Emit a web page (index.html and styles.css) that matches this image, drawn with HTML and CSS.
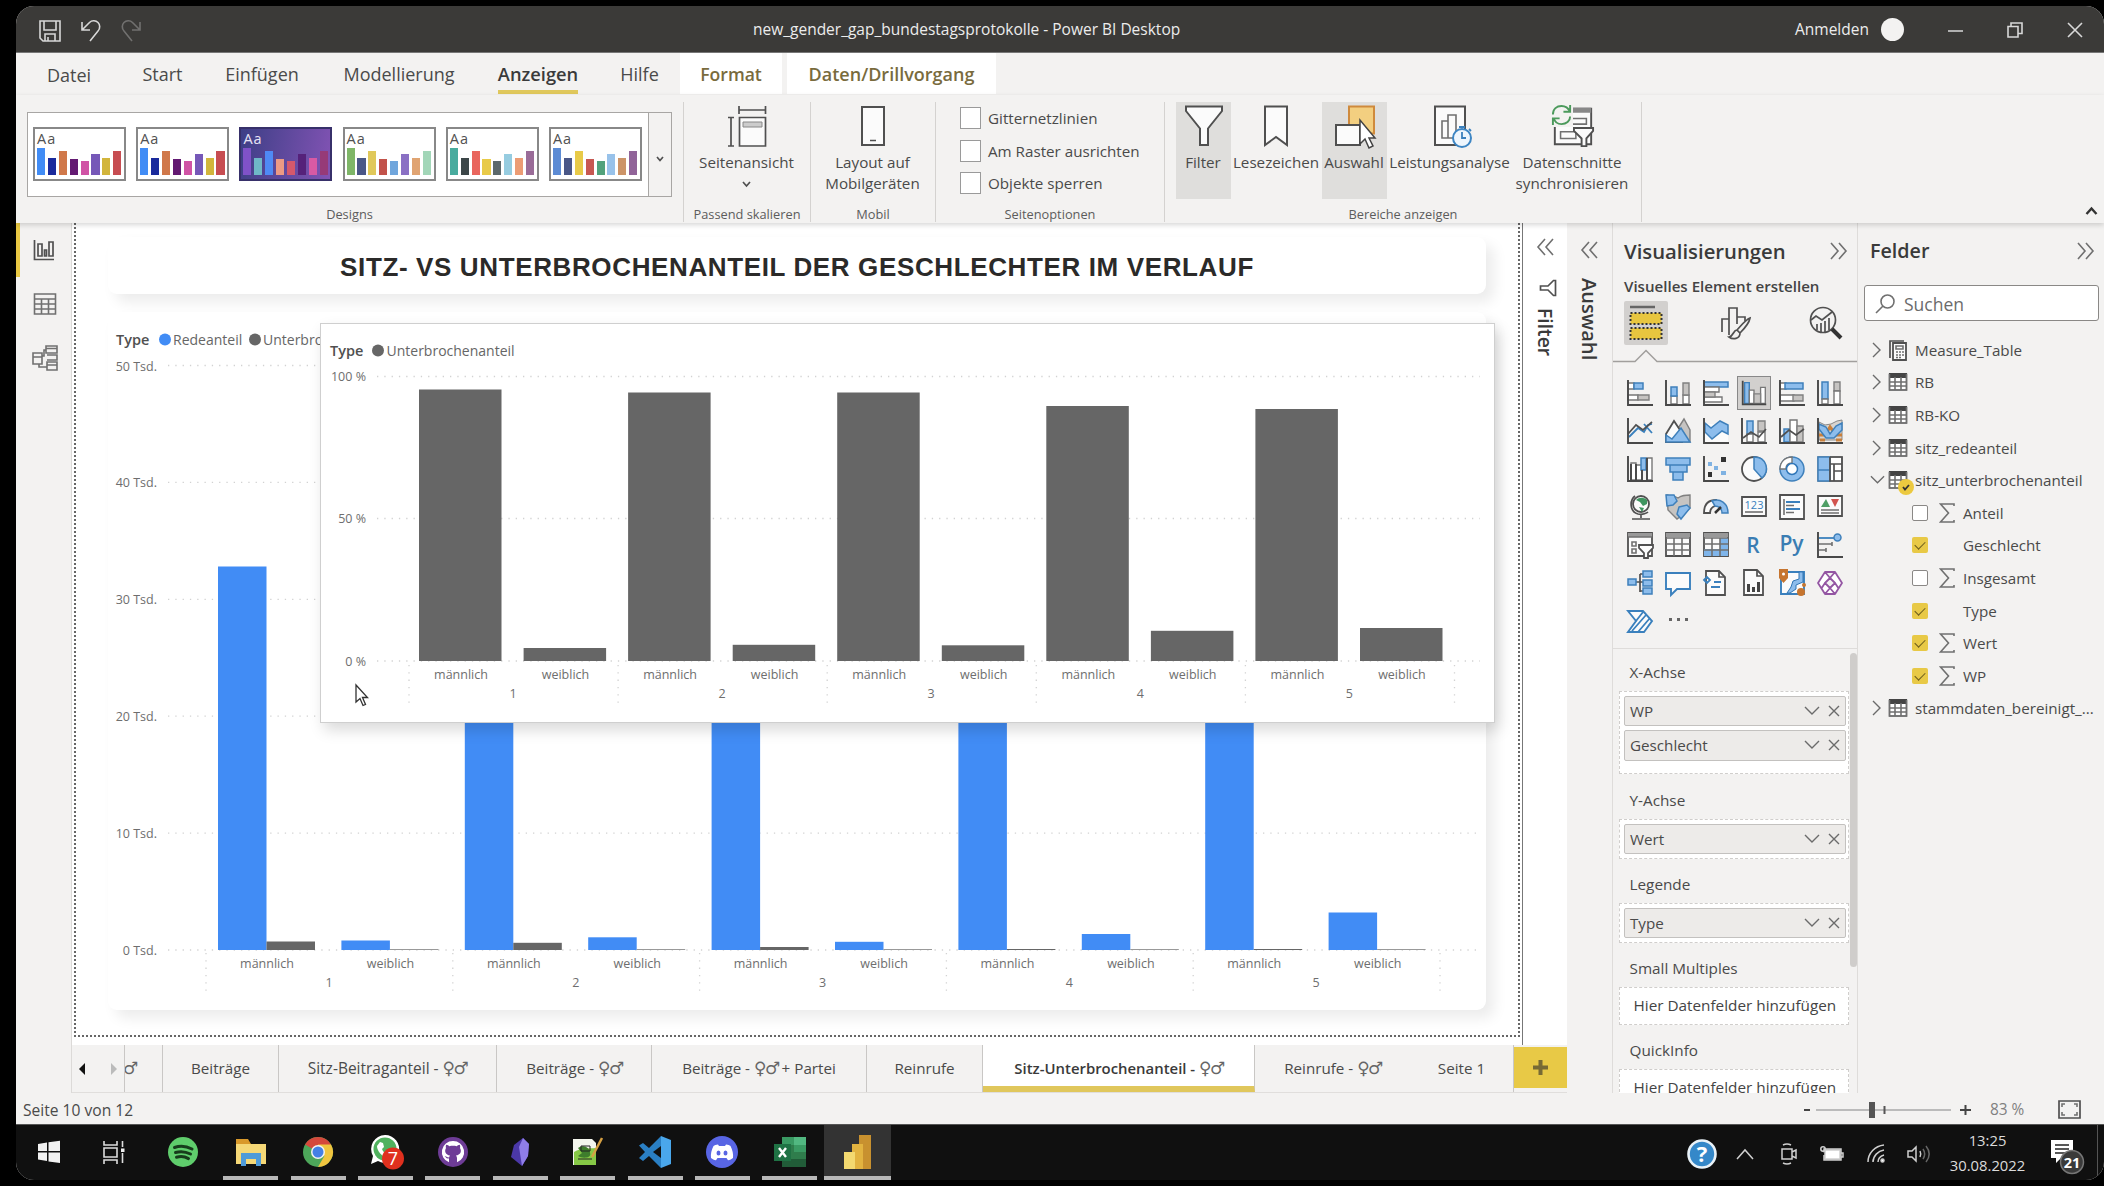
FILE: index.html
```html
<!DOCTYPE html>
<html lang="de">
<head>
<meta charset="utf-8">
<title>new_gender_gap_bundestagsprotokolle - Power BI Desktop</title>
<link rel="stylesheet" href="styles.css">
</head>
<body>
<svg width="0" height="0" class="defs">
  <defs>
    <symbol id="tbl" viewBox="0 0 20 20"><path class="wh" d="M1.500 2h17v16h-17z"/><path fill="#444" d="M1 1h18v5H1z"/><path class="ln" d="M1.500 2v16h17V2M1.500 10h17M1.500 14h17M7 5v13M13 5v13"/></symbol>
    <symbol id="dbl-left" viewBox="0 0 18 18"><path class="ln" d="M9 1 2 9l7 8M17 1l-7 8 7 8"/></symbol>
    <symbol id="dbl-right" viewBox="0 0 18 18"><path class="ln" d="m1 1 7 8-7 8M9 1l7 8-7 8"/></symbol>
    <symbol id="chev-right" viewBox="0 0 9 16"><path class="thin" d="m1 1 7 7-7 7"/></symbol>
    <symbol id="chev-down" viewBox="0 0 16 10"><path class="thin" d="m1 1 7 7 7-7"/></symbol>
    <symbol id="cross" viewBox="0 0 12 12"><path class="thin" d="m1 1 10 10M11 1 1 11"/></symbol>
    <symbol id="sigma" viewBox="0 0 16 20"><path class="ln" d="M15 3V1H1.500l8 9-8 9H15v-2"/></symbol>
  </defs>
</svg>
<div class="window">
  <header class="titlebar">
    <div class="quick">
      <svg width="22" height="22" viewBox="0 0 22 22"><path d="M1 1h20v20H4l-3-3zM5 1v9h12V1M6 21v-7h10v7M9 17v4"/></svg>
      <svg width="20" height="22" viewBox="0 0 20 22"><path d="M1 2v8h8M1.500 9.500 8.500 2.500C11 0 15 .5 17 2.500s2.500 6 0 8.500L9 21"/></svg>
      <svg class="dim" width="20" height="22" viewBox="0 0 20 22"><path d="M19 2v8h-8M18.500 9.500 11.500 2.500C9 0 5 .5 3 2.500s-2.500 6 0 8.500L11 21"/></svg>
    </div>
    <div class="doc-title">new_gender_gap_bundestagsprotokolle - Power BI Desktop</div>
    <div class="account"><span>Anmelden</span><i></i></div>
    <div class="winbtns">
      <svg width="15" height="16" viewBox="0 0 15 16"><path d="M0 9h15"/></svg>
      <svg width="16" height="16" viewBox="0 0 16 16"><path d="M1 4.500h10V15H1zM4 4V1h11v10.500h-3.500"/></svg>
      <svg width="16" height="16" viewBox="0 0 16 16"><path d="m1 1 14 14M15 1 1 15"/></svg>
    </div>
  </header>

  <nav class="menu">
    <span class="m-datei">Datei</span><span class="m-start">Start</span><span class="m-insert">Einfügen</span><span class="m-model">Modellierung</span><span class="m-view"><b>Anzeigen</b></span><span class="m-help">Hilfe</span><span class="ctx m-format">Format</span><span class="ctx m-data">Daten/Drillvorgang</span>
  </nav>

  <section class="ribbon">
    <div class="group g-designs">
      <div class="gallery"><div class="themes" id="themes"></div><div class="more"><svg width="8" height="6" viewBox="0 0 8 6"><path class="dk" d="m1 1 3 3.500L7 1"/></svg></div></div>
      <div class="glabel">Designs</div>
    </div>
    <div class="group g-fit">
      <div class="btn"><svg width="40" height="44" viewBox="0 0 40 44"><path class="wh2" d="M12.500 12h26v30h-26z"/><path class="dk" d="M12.500 12.500h26V41h-26zM12 1v8M38.500 1v8M12 5h26M1 12.500h6M1 41h6M4 12.500V41"/><path fill="#ccc" stroke="#888" d="M16 17h19v5H16z"/></svg><span>Seitenansicht</span><svg class="caret" width="9" height="7" viewBox="0 0 9 7"><path class="dk" d="m1 1 3.500 4L8 1"/></svg></div>
      <div class="glabel">Passend skalieren</div>
    </div>
    <div class="group g-mobile">
      <div class="btn"><svg width="26" height="44" viewBox="0 0 26 44"><path class="wh2 dkb" d="M2 2h22v38H2z"/><path class="dk" d="M10 35.500h6"/></svg><span>Layout auf<br>Mobilgeräten</span></div>
      <div class="glabel">Mobil</div>
    </div>
    <div class="group g-options">
      <div class="checks"><label><i></i>Gitternetzlinien</label><label><i></i>Am Raster ausrichten</label><label><i></i>Objekte sperren</label></div>
      <div class="glabel">Seitenoptionen</div>
    </div>
    <div class="group g-panes">
      <div class="btns">
        <div class="btn on b-filter"><svg width="40" height="44" viewBox="0 0 40 44"><path class="wh2 dkb" d="M2 1.500h36V6L24 23.500V40h-8V23.500L2 6z"/></svg><span>Filter</span></div>
        <div class="btn b-book"><svg width="26" height="44" viewBox="0 0 26 44"><path class="wh2 dkb" d="M2 1.500h22V40l-11-8-11 8z"/></svg><span>Lesezeichen</span></div>
        <div class="btn on b-sel"><svg width="42" height="44" viewBox="0 0 42 44"><path fill="#f3cf80" stroke="#cf8a3c" stroke-width="2" d="M15 1.500h25v27H15z"/><path class="wh2 dkb" d="M2 20h24v20H2z"/><path fill="#fff" stroke="#444" stroke-width="1.500" d="M26 15v24l5-5 4 9 4-2-4-8h6z"/></svg><span>Auswahl</span></div>
        <div class="btn b-perf"><svg width="40" height="44" viewBox="0 0 40 44"><path class="wh2 dkb" d="M2 1.500h30V40H2z"/><path class="ln" d="M9 33V16h6v17zM15 33V10h8v23z"/><circle cx="29" cy="33" r="9" fill="#eef6fd" stroke="#3d86c4" stroke-width="2"/><path class="bs" d="M26 22h6M29 27v6h4M36 24l2 2"/></svg><span>Leistungsanalyse</span></div>
        <div class="btn b-sync"><svg width="46" height="46" viewBox="0 0 46 46"><path class="wh2 dkb" d="M4 4h38v37H4z"/><path fill="#888" d="M22 3h20v5H22z"/><path class="ln" d="M20 14h17v6H18M10 28h16v7H10z"/><path fill="#f3f2f1" d="M0 0h23v23H0z"/><path class="gs" d="M2 10C2 4 6 1 11 1c4 0 7 2 9 6M20 0v7h-7M20 12c0 5-4 8-9 8-4 0-7-2-8-6M2 21v-7h7"/><path class="wh2 dkb" d="M24 24h20v3l-7 8v8h-5v-8l-8-8z"/></svg><span>Datenschnitte<br>synchronisieren</span></div>
      </div>
      <div class="glabel">Bereiche anzeigen</div>
    </div>
    <svg class="collapse" width="13" height="10" viewBox="0 0 13 10"><path d="m1.500 8 5-5.500 5 5.500"/></svg>
  </section>

  <main class="body">
    <aside class="rail">
      <div class="r-on"><svg width="22" height="22" viewBox="0 0 22 22"><path class="dk" d="M1.500 1v19.500H21M5 17V5h4v12zM11.500 17v-6h2v6zM16 17V3h4v14z"/></svg></div>
      <div><svg width="24" height="24" viewBox="0 0 24 24"><path class="ln" d="M1.500 2h21v20h-21zM1.500 7h21M1.500 12h21M1.500 17h21M8.500 7v15M15.500 7v15"/></svg></div>
      <div><svg width="26" height="26" viewBox="0 0 26 26"><path class="ln" d="M1 8h9v11H1zM1 12h9M14 1h11v7H14zM14 3.500h11M15 17h10v8H15zM15 20h10M15 10h10v5H15M10 11h2V5h2M7 19v3h8"/></svg></div>
    </aside>
    <div class="center">
      <div class="stage">
        <div class="canvas"><div class="page">
          <h1 class="card"><span>SITZ- VS UNTERBROCHENANTEIL DER GESCHLECHTER IM VERLAUF</span></h1>
          <div class="card chart"><svg id="chart-main" width="1378" height="698" viewBox="108 312 1378 698"></svg></div>
          <div class="popup"><svg id="chart-pop" width="1172" height="397" viewBox="321 324 1172 397"></svg></div>
        </div></div>
        <div class="strip s-filter"><svg width="18" height="18"><use href="#dbl-left"/></svg><svg class="fun" width="18" height="18" viewBox="0 0 18 18"><path class="dk" d="M16.500 1.500v15h-2L9 11H1.500V7H9l5.500-5.500z"/></svg><span>Filter</span></div>
      </div>
      <div class="tabs">
        <div class="nav"><svg width="7" height="12" viewBox="0 0 7 12"><path fill="#111" d="M6 0v12L0 6z"/></svg><svg width="7" height="12" viewBox="0 0 7 12"><path fill="#bbb" d="M1 0v12l6-6z"/></svg></div>
        <div class="tab t0"><i class="sx">♂</i></div>
        <div class="tab t1">Beiträge</div>
        <div class="tab t2">Sitz-Beitraganteil - <i class="sx">♀♂</i></div>
        <div class="tab t3">Beiträge - <i class="sx">♀♂</i></div>
        <div class="tab t4">Beiträge - <i class="sx">♀♂</i> + Partei</div>
        <div class="tab t5">Reinrufe</div>
        <div class="tab t6 active">Sitz-Unterbrochenanteil - <i class="sx">♀♂</i></div>
        <div class="tab t7">Reinrufe - <i class="sx">♀♂</i></div>
        <div class="tab t8">Seite 1</div>
        <div class="add"><svg width="15" height="15" viewBox="0 0 15 15"><path stroke="#776a35" stroke-width="4" d="M7.500 0v15M0 7.500h15"/></svg></div>
      </div>
    </div>
    <div class="strip s-sel"><svg width="18" height="18"><use href="#dbl-left"/></svg><span>Auswahl</span></div>

    <aside class="viz">
      <div class="phead"><b>Visualisierungen</b><svg width="18" height="18"><use href="#dbl-right"/></svg></div>
      <div class="psub">Visuelles Element erstellen</div>
      <div class="modes">
        <div class="mode on"><svg width="34" height="36" viewBox="0 0 34 36"><path stroke="#666" stroke-width="2.500" d="M1 2h25"/><path fill="#e8c63f" stroke="#333" stroke-width="2" stroke-dasharray="2 2" d="M1.500 8h31v11h-31zM1.500 23h31v11h-31z"/></svg></div>
        <div class="mode"><svg width="32" height="34" viewBox="0 0 32 34"><path class="dk" d="M2 26V13h7v16M9 26V2h8v16M17 11h8v4"/><path class="dk" d="M30 12c-5 2-9 8-13 12l3 3c4-4 9-9 10-15zM17 24c-4 0-3 6-8 7 4 3 11 2 11-4"/></svg></div>
        <div class="mode"><svg width="34" height="34" viewBox="0 0 34 34"><circle cx="14" cy="14" r="12.500" class="dk"/><path class="dk" d="m2 14 5-4 6 4 10-8M8 24v-6M12 26v-9M16 26V15M20 24V12"/><path stroke="#333" stroke-width="4" d="m23 23 9 9"/></svg></div>
      </div>
      <svg class="notch" width="245" height="18" viewBox="0 0 245 18"><path d="M0 16.500h22l11-11 11 11h201"/></svg>
      <div class="icons">
        <svg viewBox="0 0 26 26"><path class="wh" d="M1 3h6v6H1zM1 15h10v5H1z"/><path class="bl" d="M7 3h9v6H7z"/><path class="gy" d="M11 15h11v5H11z"/><path class="ax" d="M1 0v25h25"/></svg>
        <svg viewBox="0 0 26 26"><path class="wh" d="M6 16h6v8H6zM18 15h6v9h-6z"/><path class="bl" d="M6 7h6v9H6z"/><path class="gy" d="M18 3h6v12h-6z"/><path class="ax" d="M1 0v25h25"/></svg>
        <svg viewBox="0 0 26 26"><path class="bl" d="M1 2h24v5H1z"/><path class="wh" d="M1 7h15v5H1zM1 17h18v5H1z"/><path class="gy" d="M1 12h11v5H1z"/><path class="ax" d="M1 0v25h25"/></svg>
        <svg class="sel" viewBox="-4 -4 34 34"><path class="bl" d="M3 2h5v22H3z"/><path class="wh" d="M8 10h5v14H8zM20 7h5v17h-5z"/><path class="gy" d="M13 14h7v10h-7z"/><path class="ax" d="M1 0v25h25"/></svg>
        <svg viewBox="0 0 26 26"><path class="wh" d="M1 3h6v6H1zM1 15h14v6H1z"/><path class="bl" d="M6 3h18v6H6z"/><path class="gy" d="M14 15h10v6H14z"/><path class="ax" d="M1 0v25h25"/></svg>
        <svg viewBox="0 0 26 26"><path class="bl" d="M5 2h6v17H5z"/><path class="gy" d="M17 2h6v9h-6z"/><path class="wh" d="M5 19h6v5H5zM17 11h6v13h-6z"/><path class="ax" d="M1 0v25h25"/></svg>

        <svg viewBox="0 0 26 26"><path class="bs" d="m2 19 9-9 6 4 4-7 4-1M17 6l8 9"/><path class="dk" d="m1 16 8-9 7 5 9-8"/><path class="ax" d="M1 0v25h25"/></svg>
        <svg viewBox="0 0 26 26"><path class="gy" d="m12 12 7-11 6 11v12H12z"/><path class="wh2 dks" d="m1 16 8-13 8 12v9H1z"/><path class="bl" d="m1 17 6 4 9-11 9 14H1z"/></svg>
        <svg viewBox="0 0 26 26"><path class="wh2" d="M2 6h23v18H2z"/><path class="bl" d="m2 5 6 5 9-7 8 4v9l-6-3-10 8-7-7z"/><path class="ax" d="M1 0v25h25"/></svg>
        <svg viewBox="0 0 26 26"><path class="bl" d="M6 3h6v13H6z"/><path class="gy" d="M17 3h7v10h-7z"/><path class="wh" d="M6 16h6v8H6zM17 14h7v10h-7z"/><path class="dk" d="m2 20 8-6 8 5 7-8"/><path class="ax" d="M1 0v25h25"/></svg>
        <svg viewBox="0 0 26 26"><path class="bl" d="M5 11h6v13H5z"/><path class="wh" d="M11 2h7v22h-7z"/><path class="gy" d="M18 8h6v16h-6z"/><path class="dk" d="m2 19 8-7 7 5 8-6"/><path class="ax" d="M1 0v25h25"/></svg>
        <svg viewBox="0 0 26 26"><path fill="#d9d4cf" stroke="#888" d="m2 4 6 3 6-1 6-3 5-1v20H2z"/><path stroke="#c9803c" stroke-width="3" fill="none" d="M2 17h6l5-8 6 8h6M3 22h5M19 22h6"/><path class="bl" d="m2 6 7 3 4 7 6-8 6-3v7l-8 8H9l-7-9z"/><path class="ax" d="M1 0v25h25"/></svg>

        <svg viewBox="0 0 26 26"><path class="wh" d="M4 7h5v17H4zM9 9h6v15H9zM20 2h5v22h-5z"/><path class="bl" d="M14 2h5v12h-5z"/><path class="ax" d="M1 0v25h25M4 24V8M9 24V8M15 24V14M20 24V2"/></svg>
        <svg viewBox="0 0 26 26"><path class="bl" d="M1 2h24v7H1zM5 9h17v7H5zM8 16h10v8H8z"/></svg>
        <svg viewBox="0 0 26 26"><path fill="#333" d="M18 1h5v5h-5zM5 16h4v5H5z"/><path fill="#7fb2e2" d="M5 6h4v4H5zM11 10h4v4h-4zM18 15h5v4h-5z"/><path class="ax" d="M1 0v25h25"/></svg>
        <svg viewBox="0 0 26 26"><circle cx="13" cy="13" r="12" class="wh2 dks"/><path class="bl" d="M13 13V1c13 0 16 14 8 21z"/></svg>
        <svg viewBox="0 0 26 26"><circle cx="13" cy="13" r="12" class="bl"/><path class="wh" d="M13 1v6c-4 0-6 2-6 6H1C1 6 6 1 13 1z"/><circle cx="13" cy="13" r="5.500" fill="#fff" stroke="#2f76b8" stroke-width="1.500"/></svg>
        <svg viewBox="0 0 26 26"><path class="wh" d="M1 1h24v24H1z"/><path class="bl" d="M1 1h12v24H1zM1 14h12"/><path class="dk" d="M13 8h12M13 1v24h12V1H13M17 8v17M17 15h8"/></svg>

        <svg viewBox="0 0 26 26"><circle cx="14" cy="10" r="8" class="wh2 dks"/><path fill="#3f9560" d="M9 6c3-3 8-3 11 0v4l-4 2-3-4zM12 13l5 1-2 4z"/><path class="dk" d="M8 2C2 7 3 18 11 20c5 1 9-1 10-2M14 20v4M5 25h18"/></svg>
        <svg viewBox="0 0 26 26"><path class="gy" d="M2 1c5 2 7 0 11 3 4-3 7-3 12-3v13l-9 8-4 3-9-9z"/><path class="bl" d="M1 1h8l3 6-4 4-6 1zM14 13l8-2 3 3-9 11-4-5z"/></svg>
        <svg viewBox="0 0 26 26"><path class="wh2 dks" d="M1 19C1 11 5 6 13 6l-1 6c-3 1-5 3-5 7z"/><path class="bl" d="M9 7c8-3 16 2 16 12h-6c0-4-3-7-7-7z"/><path stroke="#333" stroke-width="2.500" d="m12 19 6-6"/></svg>
        <svg viewBox="0 0 26 26"><path class="wh2 dks" d="M1 3h24v19H1z"/><path class="ln" d="M4 18h18"/><text x="13" y="15" class="num">123</text></svg>
        <svg viewBox="0 0 26 26"><path class="wh2 dks" d="M1 1h24v24H1z"/><path class="ln" d="M5 5v16"/><path class="bs" d="M7 8h14M7 15h14" stroke-width="3"/><path class="ln" d="M7 11.500h8M7 18.500h8"/></svg>
        <svg viewBox="0 0 26 26"><path class="wh2 dks" d="M1 2h24v20H1z"/><path fill="#4f9f66" d="m9 5 4 8H4z"/><path fill="#d2544f" d="M14 5h8l-4 8z"/><path class="ln" d="M4 16h18M4 19h18"/></svg>

        <svg viewBox="0 0 26 26"><path class="wh2 dks" d="M1 1h24v23H1z"/><path fill="#999" d="M1 1h24v4H1z"/><path class="ln" d="M1 5h24M5 10h4v4H5zM5 17h4v4H5z"/><path class="wh2 dks" d="M12 13h14v3l-5 5v5h-4v-5l-5-5z"/></svg>
        <svg viewBox="0 0 26 26"><path class="wh2 dks" d="M1 1h24v23H1z"/><path fill="#999" d="M1 1h24v4H1z"/><path class="ln" d="M1 6h24M1 12h24M1 18h24M9 6v18M17 6v18"/></svg>
        <svg viewBox="0 0 26 26"><path class="wh2 dks" d="M1 1h24v23H1z"/><path fill="#7fb5ea" d="M17 6h8v18H1v-7h16z"/><path fill="#999" d="M1 1h24v4H1z"/><path class="ln" d="M1 6h24M1 12h24M1 18h24M9 6v18M17 6v18"/></svg>
        <svg viewBox="0 0 26 26"><text x="12" y="20.500" class="rlet">R</text></svg>
        <svg viewBox="0 0 26 26"><text x="12.500" y="18.500" class="rlet">Py</text></svg>
        <svg viewBox="0 0 26 26"><path class="bs" d="M2 6h15"/><circle class="bl" cx="20.500" cy="5.500" r="3.500"/><path class="ln" d="M2 12h13M2 18h7M15 10v4M9 16v4"/><path class="ax" d="M1 0v25h25"/></svg>

        <svg viewBox="0 0 26 26"><path class="dk" d="M8 12h8M13 4v18M13 4h3M13 21h3"/><path class="bl" d="M1 9h8v6H1zM16 1h9v6h-9zM16 10h9v6h-9zM16 18h9v6h-9z"/></svg>
        <svg viewBox="0 0 26 26"><path class="wh2 bst" d="M1 3h24v16H12l-6 6v-6H1z"/></svg>
        <svg viewBox="0 0 26 26"><path class="wh2 dks" d="M3 1h13l6 6v18H3z"/><path class="dk" d="M16 1v6h6"/><path class="bs" d="m1 10 3-3 3 3-3 3zM11 12h7M8 17h9"/></svg>
        <svg viewBox="0 0 26 26"><path class="wh2 dks" d="M3 0h13l6 6v19H3z"/><path class="dk" d="M16 0v6h6"/><path fill="#444" d="M6 14h3v8H6zM11 17h3v5h-3zM16 12h3v10h-3z"/></svg>
        <svg viewBox="0 0 26 26"><path class="wh2 bst" d="M2 2h23v22H2z"/><path fill="#8dbdec" stroke="#3377b5" d="m12 17 2-6 6-2V2h4v10l-7 3v4l-6 4H8z"/><path fill="#c6752f" d="M0-1h9v9l-4.500 5L0 8z"/><circle cx="4.500" cy="4" r="1.500" fill="#fff"/><circle cx="22" cy="22" r="4" fill="#c6752f"/><circle cx="25" cy="15" r="2" fill="#c6752f"/></svg>
        <svg viewBox="0 0 26 26"><path fill="#fff" stroke="#9456a3" stroke-width="1.800" stroke-linejoin="round" d="M8 2h10l7 11-7 11H8L1 13zM8 2l5 6 5-6M13 8l-5 5 5 5 5-5zM8 13l-4 6M18 13l4 6M13 18l-5 6M13 18l5 6"/></svg>

        <svg viewBox="0 0 26 26"><path class="wh2 bst" d="M1 3h15l9 10-8 11H1l8-11z"/><path class="bs" d="m5 23 14-16M11 24 23 10M9 13l7-9"/></svg>
        <svg viewBox="0 0 26 26"><path fill="#666" d="M4 10h3v3H4zM12 10h3v3h-3zM20 10h3v3h-3z"/></svg>
      </div>
      <div class="wellwrap">
        <div class="wells">
          <h4>X-Achse</h4>
          <div class="well tall"><div class="pill">WP<svg width="16" height="10"><use href="#chev-down"/></svg><svg width="12" height="12"><use href="#cross"/></svg></div><div class="pill">Geschlecht<svg width="16" height="10"><use href="#chev-down"/></svg><svg width="12" height="12"><use href="#cross"/></svg></div></div>
          <h4>Y-Achse</h4>
          <div class="well"><div class="pill">Wert<svg width="16" height="10"><use href="#chev-down"/></svg><svg width="12" height="12"><use href="#cross"/></svg></div></div>
          <h4>Legende</h4>
          <div class="well"><div class="pill">Type<svg width="16" height="10"><use href="#chev-down"/></svg><svg width="12" height="12"><use href="#cross"/></svg></div></div>
          <h4>Small Multiples</h4>
          <div class="well empty">Hier Datenfelder hinzufügen</div>
          <h4>QuickInfo</h4>
          <div class="well empty">Hier Datenfelder hinzufügen</div>
        </div>
        <div class="scroll"></div>
      </div>
    </aside>

    <aside class="fields">
      <div class="phead"><b>Felder</b><svg width="18" height="18"><use href="#dbl-right"/></svg></div>
      <div class="search"><svg width="20" height="20" viewBox="0 0 20 20"><circle class="ln" cx="12.500" cy="7.500" r="6.500"/><path class="ln" d="m8 12-7 7"/></svg>Suchen</div>
      <div class="tree">
        <div class="row"><svg class="cv" width="9" height="16"><use href="#chev-right"/></svg><svg class="ti" width="20" height="22" viewBox="0 0 20 22"><path class="dk" d="M2 19V2h14"/><path class="wh2 dks" d="M5 4h13v17H5z"/><path class="ln" d="M8 7h7v3H8zM8 13h2M11 13h2M14 13h2M8 16h2M11 16h2M14 16h2M8 18.500h2M11 18.500h2"/></svg>Measure_Table</div>
        <div class="row"><svg class="cv" width="9" height="16"><use href="#chev-right"/></svg><svg class="ti" width="20" height="20"><use href="#tbl"/></svg>RB</div>
        <div class="row"><svg class="cv" width="9" height="16"><use href="#chev-right"/></svg><svg class="ti" width="20" height="20"><use href="#tbl"/></svg>RB-KO</div>
        <div class="row"><svg class="cv" width="9" height="16"><use href="#chev-right"/></svg><svg class="ti" width="20" height="20"><use href="#tbl"/></svg>sitz_redeanteil</div>
        <div class="row"><svg class="cv wide" width="15" height="10"><use href="#chev-down"/></svg><span class="ti"><svg width="20" height="20"><use href="#tbl"/></svg><svg class="tick" width="16" height="16" viewBox="0 0 16 16"><circle cx="8" cy="8" r="8" fill="#ecc93f"/><path stroke="#333" stroke-width="1.800" fill="none" d="m5 8 2 2.500L11 6"/></svg></span>sitz_unterbrochenanteil</div>
        <div class="row kid"><i class="cb"></i><svg class="sg" width="16" height="20"><use href="#sigma"/></svg>Anteil</div>
        <div class="row kid"><i class="cb ok"></i><span class="sg"></span>Geschlecht</div>
        <div class="row kid"><i class="cb"></i><svg class="sg" width="16" height="20"><use href="#sigma"/></svg>Insgesamt</div>
        <div class="row kid"><i class="cb ok"></i><span class="sg"></span>Type</div>
        <div class="row kid"><i class="cb ok"></i><svg class="sg" width="16" height="20"><use href="#sigma"/></svg>Wert</div>
        <div class="row kid"><i class="cb ok"></i><svg class="sg" width="16" height="20"><use href="#sigma"/></svg>WP</div>
        <div class="row"><svg class="cv" width="9" height="16"><use href="#chev-right"/></svg><svg class="ti" width="20" height="20"><use href="#tbl"/></svg>stammdaten_bereinigt_...</div>
      </div>
    </aside>
  </main>

  <footer class="status">
    <span>Seite 10 von 12</span>
    <svg class="zoom" width="168" height="20" viewBox="0 0 168 20"><path stroke="#444" stroke-width="2" d="M0 10h6M156 10h11M161.500 5v10"/><path stroke="#bbb" stroke-width="2" d="M12 10h135"/><path stroke="#555" stroke-width="6" d="M68 2v16"/><path stroke="#555" stroke-width="2" d="M80.500 6v8"/></svg>
    <span class="pct">83 %</span>
    <svg width="23" height="19" viewBox="0 0 23 19"><path class="dk" d="M1 1h21v17H1z"/><path class="ln" d="M4 7V4h3M16 4h3v3M19 12v3h-3M7 15H4v-3"/></svg>
  </footer>

  <footer class="taskbar">
    <div class="app"><svg width="24" height="24" viewBox="0 0 24 24"><path fill="#f2f2f2" d="M1 4l9-1.500V11H1zM11.500 2.300 23 .8V11H11.500zM1 12.500h9V21l-9-1.500zM11.500 12.500H23V23l-11.500-1.600z"/></svg></div>
    <div class="app view"><svg width="24" height="24" viewBox="0 0 24 24"><path fill="none" stroke="#ddd" stroke-width="1.600" d="M2 8h13v9H2zM2 1v4h13V1M2 24v-4h13v4M20.500 1v6M20.500 13v10"/><path fill="#eee" d="M19 8.500h3.500V12H19z"/></svg></div>
    <div class="app"><svg width="30" height="30" viewBox="0 0 30 30"><circle cx="15" cy="15" r="15" fill="#5fcd6c"/><path fill="none" stroke="#173c1c" stroke-width="3" stroke-linecap="round" d="M6.500 10.500c6-2 12-1.300 17.500 1.500M7.500 15.500c5-1.500 10-1 15 1.500M8.500 20.300c4-1.200 8.500-.7 12 1.300"/></svg></div>
    <div class="app run"><svg width="30" height="28" viewBox="0 0 30 28"><path fill="#d9992b" d="M0 1h12l3 5H0z"/><path fill="#f5d877" d="M0 6h30v20H0z"/><path fill="#4f9bd9" d="M5 28V15h20v13h-5v-7H10v7z"/></svg></div>
    <div class="app run"><svg width="30" height="30" viewBox="0 0 30 30"><circle cx="15" cy="15" r="15" fill="#4da65a"/><path fill="#d5483c" d="M15 15 2 7.500a15 15 0 0 1 26 0z"/><path fill="#f0c53f" d="M15 15V7.500h13A15 15 0 0 1 15 30l6.500-11.300z"/><circle cx="15" cy="15" r="7" fill="#f3f3f3"/><circle cx="15" cy="15" r="5.500" fill="#4480e6"/></svg></div>
    <div class="app run wa"><svg width="34" height="34" viewBox="0 0 34 34"><path fill="#fff" d="M15 0a14 14 0 1 1-7 26l-7 3 2-8A14 14 0 0 1 15 0z"/><circle cx="15" cy="14" r="11.500" fill="#50b15e"/><path fill="#fff" d="M10 7l3 1 1 4-2 2c1 3 3 4 5 5l2-2 4 2c0 3-3 4-5 4-6-1-11-7-11-12z"/><circle cx="23" cy="23.500" r="11" fill="#e0301e"/><text x="23" y="30" class="seven">7</text></svg></div>
    <div class="app run"><svg width="30" height="30" viewBox="0 0 30 30"><circle cx="15" cy="15" r="15" fill="#6e3c96"/><path fill="#fff" d="M15 4a11 11 0 0 0-4 21.300v-4c-3 .8-3-1.500-4.500-2 2-.7 3 1.700 4.800 1 0-1 .4-1.500.8-1.800-4.500-.6-6-4-4.100-7.500-.4-1-.2-2.300.2-3.200 1.500 0 2.500 1 3 1.400 2.400-.6 5.200-.6 7.600 0 .5-.4 1.500-1.400 3-1.400.4 1 .6 2.200.2 3.200 2 3.500.4 7-4.100 7.500.6.500 1.100 1.500 1.100 3v3.800A11 11 0 0 0 15 4z"/></svg></div>
    <div class="app run"><svg width="20" height="30" viewBox="0 0 20 30"><path fill="#4b38a8" d="M13 1 4 8 1 20l11 9 6-10 1-12z"/><path fill="#8f7de8" d="m13 1-4 9 3 19 6-10 1-12z"/></svg></div>
    <div class="app run"><svg width="31" height="30" viewBox="0 0 31 30"><path fill="#f4f6ee" d="M1 2h19l4 4v22H1z"/><path fill="#86c846" d="M2 15c8-5 14-3 22-4v17H2z"/><path fill="#3e7d2c" d="M6 11c6-4 12 0 12 5 2 5-7 6-12 3l4-3z"/><path fill="none" stroke="#222" d="M9 9h9v5H9zM6 22h14"/><path stroke="#d6a043" stroke-width="2.500" d="M30 1 20 20"/></svg></div>
    <div class="app run"><svg width="32" height="32" viewBox="0 0 32 32"><path fill="#2a7fc4" d="m22 0-12 12-6-5-4 2.500L6 16l-6 6 4 3 6-5 12 12z"/><path fill="#111" d="M22 10v12l-8-6z"/><path fill="#4aa7ec" d="m22 0 10 4v24l-10 4z"/></svg></div>
    <div class="app run"><svg width="32" height="32" viewBox="0 0 32 32"><circle cx="16" cy="16" r="16" fill="#5865e4"/><path fill="#fff" d="M12 8.500 13 10h6l1-1.500c2 0 3.500 1 4.500 1.500 2 4 3 8 2.500 12-1.500 1-3 2-5 2.200L20.500 22h-9L10 24.200C8 24 6.500 23 5 22c-.5-4 .5-8 2.500-12 1-.500 2.500-1.500 4.500-1.500z"/><ellipse cx="12.500" cy="17" rx="2" ry="2.500" fill="#5865e4"/><ellipse cx="19.500" cy="17" rx="2" ry="2.500" fill="#5865e4"/></svg></div>
    <div class="app run"><svg width="32" height="30" viewBox="0 0 32 30"><path fill="#2f7d4c" d="M8 0h24v30H8z"/><path fill="#52b881" d="M20 0h12v8H20z"/><path fill="#3a9a63" d="M8 0h12v8H8zM20 8h12v7H20z"/><path fill="#215c38" d="M8 22h24v8H8z"/><path fill="#1f7244" d="M0 7h17v17H0z"/><path stroke="#fff" stroke-width="2.400" d="m5 11 7 9M12 11l-7 9"/></svg></div>
    <div class="app run current"><svg width="27" height="34" viewBox="0 0 27 34"><path fill="#c8912f" d="M15 0h12v34H15z"/><path fill="#e2b340" d="M8 9h11v25H8z"/><path fill="#f3d970" d="M0 17h11v17H0z"/></svg></div>
    <div class="tray">
      <svg width="30" height="30" viewBox="0 0 30 30"><circle cx="15" cy="15" r="13.500" fill="#3588c9" stroke="#e9f2f8" stroke-width="2.600"/><text x="15" y="22.500" class="help">?</text></svg>
      <svg width="18" height="12" viewBox="0 0 18 12"><path d="m1 11 8-9 8 9"/></svg>
      <svg width="18" height="22" viewBox="0 0 18 22"><path d="M2 6h10v10H2zM12 9l4-2v8l-4-2M3 2c3-1.500 5-1.500 8 0M3 20c3 1.500 5 1.500 8 0"/></svg>
      <svg width="24" height="16" viewBox="0 0 24 16"><path fill="#fff" d="M5 4h15v9H5z"/><path d="M4 5V3h17v11H4V9M21 7h2v4h-2M5 4 3 6"/><circle cx="3" cy="3" r="2.200"/></svg>
      <svg width="18" height="19" viewBox="0 0 18 19"><path d="M1 18C1 9 8 2 17 1M6 18C6 12 11 7 17 6M11 18c0-4 3-6 6-7"/><circle cx="15.500" cy="16.500" r="1.500" fill="#fff"/></svg>
      <svg width="24" height="20" viewBox="0 0 24 20"><path d="M1 7h4l4-4v14l-4-4H1zM13 7c1 2 1 4 0 6"/><path opacity=".45" d="M16 5c2 3 2 7 0 10M19 2c4 5 4 11 0 16"/></svg>
      <div class="clock">13:25<br>30.08.2022</div>
      <svg class="note" width="36" height="34" viewBox="0 0 36 34"><path fill="#fff" stroke="none" d="M0 0h22v18H10l-5 5v-5H0z"/><path stroke="#222" d="M4 5h14M4 9h14M4 13h10"/><circle cx="21" cy="22" r="11.500" fill="#3a3a3a" stroke="#777"/><text x="21" y="27.500" class="n21">21</text></svg>
      <i class="edge"></i>
    </div>
  </footer>
</div>
<script src="charts.js"></script>
</body>
</html>
```
FILE: styles.css
```css
* { box-sizing: border-box; }
body { margin: 0; padding: 6px 0 0 16px; width: 2104px; height: 1186px; overflow: hidden; background: #000; color: #4a4a4a; font: 15.2px/20px "Open Sans", "Noto Sans", sans-serif; }
svg { display: block; flex: none; overflow: visible; }
i { font-style: normal; }
.defs { position: absolute; }
.window { width: 2088px; height: 1174px; border-radius: 18px; overflow: hidden; background: #f3f2f1; display: flex; flex-direction: column; }

/* icon strokes */
.ln { fill: none; stroke: #707070; stroke-width: 1.6; }
.thin { fill: none; stroke: #6b6b6b; stroke-width: 1.4; }
.dk { fill: none; stroke: #505050; stroke-width: 1.7; }
.wh { fill: #fff; stroke: #777; stroke-width: 1.4; }
.wh2 { fill: #fbfbfb; }
.dkb { stroke: #505050; stroke-width: 2; }
.dks { stroke: #505050; stroke-width: 1.8; }
.bl { fill: #8dbdec; stroke: #3f80bb; stroke-width: 1.5; }
.gy { fill: #c6c4c2; stroke: #808080; stroke-width: 1.4; }
.ax { fill: none; stroke: #484848; stroke-width: 1.9; }
.bs { fill: none; stroke: #3a80bd; stroke-width: 1.8; }
.bst { stroke: #3a80bd; stroke-width: 1.9; }
.gs { fill: none; stroke: #4c9a5c; stroke-width: 2; }

/* title bar */
.titlebar { height: 47px; flex: none; background: #3b3a38; border-bottom: 1px solid #777; display: flex; align-items: center; color: #ececec; font-size: 15.5px; }
.titlebar svg { fill: none; stroke: #d8d8d8; stroke-width: 1.6; }
.quick { display: flex; gap: 20px; padding: 3px 0 0 23px; width: 737px; }
.quick .dim { opacity: .35; }
.doc-title { width: 1042px; line-height: 24px; }
.account { display: flex; align-items: center; gap: 12px; width: 144px; }
.account i { width: 23px; height: 23px; border-radius: 50%; background: #f3f2f1; }
.winbtns { display: flex; gap: 44px; padding: 2px 0 0 9px; }

/* menu */
.menu { display: flex; height: 42px; flex: none; font-size: 18px; line-height: 42px; text-align: center; }
.menu span { flex: none; }
.m-datei { margin-left: 6px; width: 94px; padding-top: 1px; }
.m-start { width: 93px; }
.m-insert { width: 106px; }
.m-model { width: 168px; }
.m-view { width: 110px; display: flex; justify-content: center; }
.m-view b { font-weight: 600; font-size: 18.3px; color: #3a3a3a; border-bottom: 4px solid #e0c85c; height: 41px; }
.m-help { margin-left: 6px; width: 81px; }
.menu .ctx { background: #fff; height: 41px; font-weight: 600; font-size: 17.6px; color: #796b3d; }
.m-format { width: 102px; }
.menu .m-data { width: 209px; margin-left: 5px; font-size: 18px; }

/* ribbon */
.ribbon { position: relative; z-index: 1; display: flex; height: 128px; flex: none; box-shadow: 0 2px 5px rgba(0,0,0,.16); background: #f3f2f1; padding: 7px 0 1px; }
.group { flex: none; display: flex; flex-direction: column; justify-content: space-between; align-items: center; border-right: 1px solid #d4d2d0; }
.g-designs { width: 668px; } .g-fit { width: 127px; } .g-mobile { width: 125px; } .g-options { width: 229px; } .g-panes { width: 477px; }
.glabel { font-size: 12.8px; line-height: 16px; color: #5c5c5c; }
.gallery { align-self: flex-start; margin: 10px 0 0 11px; width: 645px; height: 85px; border: 1px solid #a8a6a4; background: #fff; display: flex; }
.themes { display: flex; align-items: center; gap: 10.2px; padding-left: 5px; width: 620px; }
.more { flex: 1; border-left: 1px solid #a8a6a4; background: #f3f2f1; display: flex; align-items: center; justify-content: center; padding-top: 8px; }
.theme { width: 93px; height: 54px; border: 2px solid #888; padding: 2px 2px 4px; display: flex; flex-direction: column; justify-content: space-between; font-size: 14.5px; line-height: 16px; letter-spacing: 1px; color: #505050; margin-bottom: 2px; }
.theme.purple { background: linear-gradient(100deg, #3d3f86, #8253b4); color: #e8e4f5; border-color: #37306a; }
.theme div { display: flex; align-items: flex-end; gap: 2.8px; height: 27px; }
.theme div i { width: 8.1px; }
.btn { display: flex; flex-direction: column; align-items: center; text-align: center; padding-top: 3px; line-height: 21.5px; height: 97px; white-space: nowrap; }
.btn svg { height: 44px; }
.btn span { margin-top: 2.5px; margin-right: 1px; }
.btn svg.caret { margin-top: 8px; height: 7px; }
.btns { display: flex; padding-left: 11px; align-self: flex-start; }
.on { background: #dfdedc; }
.b-filter { width: 55px; } .b-book { width: 91px; } .b-sel { width: 65px; } .b-perf { width: 126px; } .b-sync { width: 119px; }
.b-book svg, .b-perf svg, .g-fit svg, .g-mobile svg { margin-right: 1px; }
.b-perf svg { margin-left: 6px; }
.checks { display: flex; flex-direction: column; gap: 10.5px; align-self: flex-start; padding: 5px 0 0 24px; }
.checks label { display: flex; align-items: center; gap: 7px; height: 22px; }
.checks i { width: 21px; height: 22px; background: #fff; border: 1.5px solid #9a9a9a; }
.collapse { margin: 104px 0 0 443px; }
.collapse path { fill: none; stroke: #333; stroke-width: 2.4; }

/* body */
.body { display: flex; height: 870px; flex: none; }
.rail { width: 56px; border-right: 1px solid #dcdad8; display: flex; flex-direction: column; flex: none; }
.rail div { height: 54px; display: flex; align-items: center; justify-content: center; padding-left: 2px; }
.rail .r-on { border-left: 4px solid #e9c843; padding: 0 3px 0 0; height: 54px; }
.center { width: 1495px; flex: none; display: flex; flex-direction: column; }
.stage { display: flex; height: 822px; background: #fff; }
.canvas { width: 1451px; border-right: 1px solid #777; padding: 0 2px 8px 2px; }
.page { position: relative; height: 814px; border: 2px dotted #666; border-top: 0; padding: 14px 0 0 32px; }
.card { width: 1378px; background: #fff; border-radius: 9px; box-shadow: 8px 8px 14px rgba(0,0,0,.08); margin: 0; }
h1.card { height: 57px; font: bold 26px/60px "Liberation Sans", Arial, sans-serif; text-align: center; color: #2b2a29; letter-spacing: .63px; white-space: nowrap; }
.chart { margin-top: 18px; height: 698px; }
.popup { position: absolute; left: 244px; top: 100px; width: 1175px; height: 400px; border: 1px solid #cfcfcf; background: #fff; box-shadow: 4px 7px 14px rgba(0,0,0,.15); }
#chart-main text, #chart-pop text { font-size: 12.5px; fill: #6e6e6e; }
#chart-main .leg, #chart-pop .leg { font-size: 14px; fill: #666; }
#chart-main .legb, #chart-pop .legb { font-size: 14.5px; font-weight: 600; fill: #505050; }
.grid { stroke: #d2d2d2; stroke-width: 1.3; stroke-dasharray: 1.3 6; }
.strip { display: flex; flex-direction: column; align-items: center; color: #3a3a3a; font-weight: 600; font-size: 19.3px; line-height: 24px; flex: none; }
.strip span { writing-mode: vertical-rl; }
.s-filter { width: 44px; padding-top: 15px; }
.s-filter .fun { margin: 23px 0 11px 5px; }
.s-sel { width: 46px; padding: 18px 1px 0 0; border-right: 1px solid #dedcda; font-size: 20.1px; }
.s-sel span { margin-top: 19px; }

/* page tabs */
.tabs { display: flex; height: 48px; border-bottom: 1px solid #e0dedc; }
.tab, .nav { flex: none; border-right: 1px solid #c9c7c5; line-height: 47px; text-align: center; white-space: nowrap; overflow: hidden; }
.sx { font-family: "DejaVu Sans", sans-serif; font-size: 17px; line-height: 20px; color: #666; letter-spacing: -1.5px; margin-right: -1px; }
.nav { width: 53px; display: flex; align-items: center; gap: 24px; padding-left: 7px; }
.t0 { width: 38px; text-align: left; } .t1 { width: 116px; } .t2 { width: 218px; } .t3 { width: 155px; } .t4 { width: 215px; } .t5 { width: 116px; } .t6 { width: 272px; } .t7 { width: 155px; border: 0; } .t8 { width: 104px; }
.t2 { font-size: 15.5px; padding-right: 1px; }
.t0 .sx { margin-left: -2px; }
.tab.active { background: #fff; border-bottom: 6px solid #e0c75c; font-weight: 600; font-size: 14.9px; color: #3a3a3a; }
.active .sx { font-weight: 400; }
.add { width: 53px; height: 41px; margin-top: 2px; background: #e8c946; display: flex; align-items: center; justify-content: center; }

/* visualizations pane */
.viz { width: 245px; flex: none; border-right: 1px solid #dedcda; display: flex; flex-direction: column; overflow: hidden; }
.phead { display: flex; justify-content: space-between; align-items: center; height: 54px; padding: 1px 9px 0 11px; flex: none; }
.phead b { font-size: 20.3px; font-weight: 600; color: #3a3a3a; }
.psub { padding-left: 11px; height: 18px; line-height: 18px; font-size: 15.1px; font-weight: 600; color: #444; white-space: nowrap; }
.modes { display: flex; padding: 6px 0 0 11px; gap: 46px; }
.mode { width: 44px; height: 44px; display: flex; align-items: center; justify-content: center; }
.mode.on { background: #d2d0ce; border-radius: 2px; }
.notch { margin-bottom: 17px; }
.notch path { fill: none; stroke: #a19f9d; stroke-width: 1.5; }
.icons { display: grid; grid-template-columns: repeat(6, 26px); grid-auto-rows: 26px; gap: 12px; padding-left: 14px; height: 269px; flex: none; border-bottom: 1px solid #dedcda; }
.icons svg { width: 26px; height: 26px; }
.icons .sel { width: 34px; height: 34px; margin: -4px; background: #d2d0ce; border: 1px solid #888; }
.num { font-size: 11px; fill: #3a80bd; text-anchor: middle; }
.rlet { font-size: 21px; font-weight: 600; fill: #3a7db3; text-anchor: middle; }
.wellwrap { display: flex; flex: 1; min-height: 0; overflow: hidden; padding-top: 10.5px; }
.wells { width: 237px; padding-left: 6px; flex: none; }
.wells h4 { margin: 0 0 7px 10.5px; font-weight: 400; font-size: 15.3px; line-height: 24px; }
.well { width: 230px; height: 40px; margin-bottom: 13px; background: #fff; border: 1.5px dashed #d0cecc; padding: 4px 2px 3px 4px; display: flex; flex-direction: column; gap: 4px; }
.well.tall { height: 83px; margin-bottom: 14px; }
.well.empty { height: 38px; line-height: 31px; padding: 2.5px 0 0 13.5px; white-space: nowrap; color: #444; font-size: 15.3px; }
.pill { display: flex; align-items: center; gap: 8px; height: 30.5px; flex: none; background: #edebe9; border: 1px solid #c3c1bf; border-radius: 2px; padding: 0 5px; white-space: nowrap; }
.pill svg:first-of-type { margin-left: auto; }
.scroll { width: 8px; height: 314px; margin-top: -7px; border-radius: 4px; background: #cfcdcb; }

/* fields pane */
.fields { width: 246px; flex: none; }
.fields .phead { padding: 1px 9px 0 12px; }
.fields .phead b { font-size: 19.7px; }
.search { margin: 8px 5px 0 6px; height: 36px; background: #fff; border: 1.5px solid #8a8886; border-radius: 3px; display: flex; align-items: center; gap: 9px; padding: 1px 0 0 10px; font-size: 17.5px; color: #6b6b6b; }
.tree { padding: 12.5px 0 0 9px; }
.row { display: flex; align-items: center; height: 32.6px; white-space: nowrap; font-size: 15.2px; }
.cv { margin: 0 9px 0 5px; }
.row .cv.wide { margin: 0 5px 0 3px; }
.ti { position: relative; margin: 0 7px 0 -2px; }
.tick { position: absolute; left: 10px; top: 9px; }
.kid { padding-left: 45px; }
.cb { width: 16px; height: 16px; border: 1.5px solid #8a8886; border-radius: 2px; margin-right: 11px; background: #fff; }
.cb.ok { background: #e8c946; border: 0; display: flex; align-items: center; justify-content: center; }
.cb.ok::before { content: ""; width: 9px; height: 5px; border-left: 1.4px solid #6b5c1c; border-bottom: 1.4px solid #6b5c1c; transform: translateY(-1px) rotate(-45deg); }
.sg { width: 16px; margin-right: 8px; }

/* status bar */
.status { height: 31px; flex: none; display: flex; align-items: center; padding: 2px 23px 0 7px; font-size: 15.6px; }
.zoom { margin-left: auto; margin-right: 18px; }
.pct { width: 68px; font-size: 15.4px; color: #808080; }

/* taskbar */
.taskbar { height: 57px; flex: 1; background: #101010; border-top: 1.5px solid #555; display: flex; padding: 0 0 1px 5px; }
.app { width: 55px; margin-right: 12.4px; height: 55px; flex: none; display: flex; align-items: center; justify-content: center; border-bottom: 4px solid transparent; padding-top: 3px; }
.app.run { border-bottom-color: #b8b8b8; }
.app.view { padding-right: 4px; }
.app.wa { padding-left: 4px; }
.app.current { width: 67px; background: #333; margin-left: -5.4px; }
.seven { font-size: 18px; fill: #fff; text-anchor: middle; }
.tray { margin-left: auto; display: flex; align-items: center; height: 55px; padding-right: 6px; }
.tray svg { fill: none; stroke: #d0d0d0; stroke-width: 1.5; margin-top: 2px; }
.tray svg:nth-child(1) { margin-right: 19px; stroke: none; }
.tray svg:nth-child(2) { margin-right: 26px; }
.tray svg:nth-child(3) { margin-right: 22px; }
.tray svg:nth-child(4) { margin-right: 23px; }
.tray svg:nth-child(5) { margin-right: 22px; }
.tray .help { font-size: 22px; font-weight: 700; fill: #fff; text-anchor: middle; }
.clock { width: 113px; text-align: center; color: #dcdcdc; font-size: 14.8px; line-height: 24.5px; margin-right: 2px; }
.tray .note { margin: 8px 10px 0 5px; }
.n21 { font-size: 14.5px; font-weight: 700; fill: #fff; stroke: none; text-anchor: middle; }
.edge { width: 1px; height: 55px; background: #555; }
```
FILE: charts.js
```js
const el = (tag, attrs, text) => {
  const parts = Object.entries(attrs).map(([k, v]) => `${k}="${v}"`).join(" ");
  return `<${tag} ${parts}>${text ?? ""}</${tag}>`;
};
const BLUE = "#418cf5", GRAY = "#666666";

// Theme gallery
const heights = [26.7, 16.7, 23.3, 15.3, 13.3, 20.7, 16.7, 23.3];
const themes = [
  ["#418cf5", "#1a2a9c", "#d0784a", "#631a72", "#d053a5", "#7658b8", "#d2b53c", "#c74d52"],
  ["#418cf5", "#1a2a9c", "#d0784a", "#631a72", "#d053a5", "#7658b8", "#d2b53c", "#c74d52"],
  ["#8052c8", "#6fb8c8", "#4f8af5", "#ec9a84", "#d4586c", "#55217a", "#d85aa4", "#963a78"],
  ["#7fb668", "#4a5787", "#e0c85a", "#c2524a", "#70a6dc", "#8a70c4", "#e0a472", "#a2d6b8"],
  ["#48ab9e", "#3c4648", "#e9665e", "#e8ca48", "#5c696c", "#96cce0", "#ec9c74", "#9a6c98"],
  ["#5c8bd4", "#4a5787", "#e8ca48", "#c75852", "#52a27c", "#98c2ea", "#cc9468", "#916499"]
];
document.getElementById("themes").innerHTML = themes.map((colors, t) =>
  `<div class="theme${t === 2 ? " purple" : ""}">Aa<div>` +
  colors.map((c, i) => `<i style="height:${heights[i]}px;background:${c}"></i>`).join("") +
  "</div></div>").join("");

// Main chart
let out = el("text", { x: 116, y: 345, class: "legb" }, "Type") +
  el("circle", { cx: 165, cy: 339.5, r: 6, fill: BLUE }) + el("text", { x: 173, y: 345, class: "leg" }, "Redeanteil") +
  el("circle", { cx: 255, cy: 339.5, r: 6, fill: GRAY }) + el("text", { x: 263, y: 345, class: "leg" }, "Unterbroc");
for (let k = 0; k <= 5; k++) {
  const y = 950 - k * 116.9;
  out += el("line", { x1: 168, x2: 1476, y1: y, y2: y, class: "grid" }) +
    el("text", { x: 157, y: y + 5, "text-anchor": "end" }, `${k * 10} Tsd.`);
}
const main = [[566.5, 941.5, 940.5], [640, 942.8, 937.3], [650, 947, 941.8], [660, 949, 934], [670, 949, 912.5]];
main.forEach(([m, mg, w], i) => {
  const x = 218 + i * 246.8;
  const bar = (bx, y, fill) => el("rect", { x: bx, y, width: 48.5, height: 950 - y, fill });
  out += bar(x, m, BLUE) + bar(x + 48.5, mg, GRAY) + bar(x + 123.4, w, BLUE) + bar(x + 171.9, 949, "#999") +
    el("text", { x: x + 49, y: 967.5, "text-anchor": "middle" }, "männlich") +
    el("text", { x: x + 172.5, y: 967.5, "text-anchor": "middle" }, "weiblich") +
    el("text", { x: x + 111, y: 987, "text-anchor": "middle" }, i + 1);
});
for (let k = 0; k <= 5; k++) {
  const x = 206 + k * 246.8;
  out += el("line", { x1: x, x2: x, y1: 953, y2: 996, class: "grid" });
}
document.getElementById("chart-main").innerHTML = out;

// Overlaid chart
out = el("text", { x: 330, y: 355.5, class: "legb" }, "Type") +
  el("circle", { cx: 378, cy: 350.5, r: 6, fill: GRAY }) + el("text", { x: 386.5, y: 355.5, class: "leg" }, "Unterbrochenanteil");
[[0, 661], [50, 518.5], [100, 376.5]].forEach(([v, y]) => {
  out += el("line", { x1: 377, x2: 1480, y1: y, y2: y, class: "grid" }) +
    el("text", { x: 366, y: y + 4.5, "text-anchor": "end" }, `${v} %`);
});
[[389.5, 648], [392.5, 644.8], [392.5, 645.3], [406, 630.8], [409, 628]].forEach(([m, w], i) => {
  const x = 419 + i * 209.1;
  const bar = (bx, y) => el("rect", { x: bx, y, width: 82.5, height: 661 - y, fill: GRAY });
  out += bar(x, m) + bar(x + 104.6, w) +
    el("text", { x: x + 42, y: 679, "text-anchor": "middle" }, "männlich") +
    el("text", { x: x + 146.5, y: 679, "text-anchor": "middle" }, "weiblich") +
    el("text", { x: x + 94, y: 698, "text-anchor": "middle" }, i + 1);
});
for (let k = 0; k <= 5; k++) {
  const x = 409 + k * 209.1;
  out += el("line", { x1: x, x2: x, y1: 665, y2: 706, class: "grid" });
}
out += el("path", { d: "M356 685v17l4-3.500 3 7 2.500-1-3-7h5z", fill: "#fff", stroke: "#333", "stroke-width": 1.3 });
document.getElementById("chart-pop").innerHTML = out;
```
